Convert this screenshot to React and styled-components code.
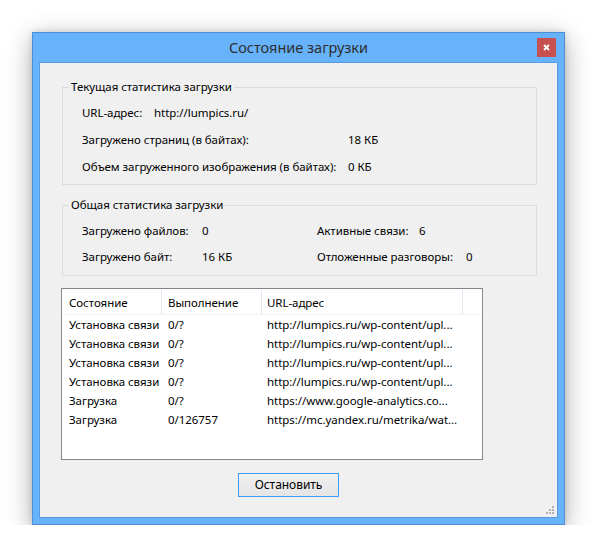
import React from "react";
import styled, { createGlobalStyle } from "styled-components";

const GlobalStyle = createGlobalStyle`
  html, body { margin: 0; padding: 0; background: #ffffff; }
  body {
    font-family: "Noto Sans", "Open Sans", sans-serif;
    font-size: 11.5px;
    letter-spacing: -0.05px;
    color: #000;
  }
`;

const Page = styled.div`
  padding: 32px 0 0 32px;
`;

const Window = styled.div`
  box-sizing: border-box;
  width: 533px;
  height: 493px;
  display: flex;
  flex-direction: column;
  padding: 0 6px 6px;
  background: #66b3fb;
  border: 1px solid #4d8fd2;
  box-shadow: 0 6px 24px rgba(0, 0, 0, 0.33), 0 0 6px rgba(0, 0, 0, 0.12);
`;

const TitleBar = styled.div`
  height: 29px;
  display: grid;
  grid-template-columns: 1fr auto 1fr;
  align-items: center;
`;

const Title = styled.div`
  grid-column: 2;
  font-size: 14.5px;
  letter-spacing: 0;
  color: #2e2e2e;
  padding-bottom: 1px;
`;

const CloseButton = styled.div`
  grid-column: 3;
  justify-self: end;
  align-self: start;
  margin-top: 5px;
  margin-right: 2px;
  width: 19px;
  height: 19px;
  background: #c75050;
  display: flex;
  align-items: center;
  justify-content: center;
`;

const Content = styled.div`
  position: relative;
  flex: 1;
  display: flex;
  flex-direction: column;
  background: #f0f0f0;
  border: 1px solid #5a9be0;
  padding: 24px 20px 0 22px;
`;

const GroupBox = styled.div`
  position: relative;
  border: 1px solid #dcdcdc;
  padding: 17px 0 ${(p) => p.$pb}px 19px;
  display: flex;
  flex-direction: column;
  gap: ${(p) => p.$gap}px;
  margin-bottom: ${(p) => p.$mb}px;
`;

const Legend = styled.div`
  position: absolute;
  top: -9px;
  left: 6px;
  padding: 0 2px;
  background: #f0f0f0;
  line-height: 16px;
  color: #000;
`;

const InfoRow = styled.div`
  display: grid;
  grid-template-columns: ${(p) => p.$lw}px auto;
  line-height: 16px;
  white-space: nowrap;
`;

const PairRow = styled.div`
  display: grid;
  grid-template-columns: 235px auto;
  line-height: 16px;
`;

const Pair = styled.div`
  display: grid;
  grid-template-columns: ${(p) => p.$lw}px auto;
  white-space: nowrap;
`;

const ListBox = styled.div`
  margin-left: -1px;
  width: 422px;
  height: 172px;
  box-sizing: border-box;
  border: 1px solid #828790;
  background: #ffffff;
  margin-bottom: 13px;
`;

const HeaderRow = styled.div`
  display: flex;
  height: 24px;
  padding-top: 1px;
  box-sizing: border-box;
  height: 26px;
  border-bottom: 1px solid #f0f3f8;
`;

const HeaderCell = styled.div`
  box-sizing: border-box;
  width: ${(p) => p.$w}px;
  flex: ${(p) => (p.$w ? "none" : "1")};
  padding-left: ${(p) => p.$pl}px;
  border-right: ${(p) => (p.$w ? "1px solid #e3e8ef" : "none")};
  display: flex;
  align-items: center;
  white-space: nowrap;
`;

const DataRow = styled.div`
  display: flex;
  height: 19px;
  align-items: center;
`;

const Cell = styled.div`
  box-sizing: border-box;
  width: ${(p) => p.$w}px;
  padding-left: ${(p) => p.$pl}px;
  white-space: nowrap;
  overflow: hidden;
`;

const ButtonRow = styled.div`
  display: flex;
  padding-left: 176px;
`;

const Button = styled.div`
  box-sizing: border-box;
  width: 101px;
  height: 24px;
  border: 1px solid #3c9cfc;
  background: linear-gradient(#f0f0f0, #e5e5e5);
  display: flex;
  align-items: center;
  justify-content: center;
  font-size: 12px;
  padding-bottom: 1px;
`;

const Grip = styled.svg`
  position: absolute;
  right: 3px;
  bottom: 3px;
`;

const columns = [
  { w: 100, pl: 7 },
  { w: 100, pl: 6 },
  { w: 201, pl: 5 },
];

const rows = [
  ["Установка связи", "0/?", "http://lumpics.ru/wp-content/upl..."],
  ["Установка связи", "0/?", "http://lumpics.ru/wp-content/upl..."],
  ["Установка связи", "0/?", "http://lumpics.ru/wp-content/upl..."],
  ["Установка связи", "0/?", "http://lumpics.ru/wp-content/upl..."],
  ["Загрузка", "0/?", "https://www.google-analytics.co..."],
  ["Загрузка", "0/126757", "https://mc.yandex.ru/metrika/wat..."],
];

export default function App() {
  return (
    <>
      <GlobalStyle />
      <Page>
        <Window>
          <TitleBar>
            <Title>Состояние загрузки</Title>
            <CloseButton>
              <svg width="7" height="7" viewBox="0 0 7 7">
                <path d="M1 1 L6 6 M6 1 L1 6" stroke="#fff" strokeWidth="1.8" />
              </svg>
            </CloseButton>
          </TitleBar>
          <Content>
            <GroupBox $pb={9} $gap={11} $mb={20}>
              <Legend>Текущая статистика загрузки</Legend>
              <InfoRow $lw={72}>
                <span>URL-адрес:</span>
                <span>http://lumpics.ru/</span>
              </InfoRow>
              <InfoRow $lw={266}>
                <span>Загружено страниц (в байтах):</span>
                <span>18 КБ</span>
              </InfoRow>
              <InfoRow $lw={266}>
                <span>Объем загруженного изображения (в байтах):</span>
                <span>0 КБ</span>
              </InfoRow>
            </GroupBox>
            <GroupBox $pb={10} $gap={10} $mb={12}>
              <Legend>Общая статистика загрузки</Legend>
              <PairRow>
                <Pair $lw={120}>
                  <span>Загружено файлов:</span>
                  <span>0</span>
                </Pair>
                <Pair $lw={102}>
                  <span>Активные связи:</span>
                  <span>6</span>
                </Pair>
              </PairRow>
              <PairRow>
                <Pair $lw={120}>
                  <span>Загружено байт:</span>
                  <span>16 КБ</span>
                </Pair>
                <Pair $lw={149}>
                  <span>Отложенные разговоры:</span>
                  <span>0</span>
                </Pair>
              </PairRow>
            </GroupBox>
            <ListBox>
              <HeaderRow>
                <HeaderCell $w={100} $pl={7}>Состояние</HeaderCell>
                <HeaderCell $w={100} $pl={6}>Выполнение</HeaderCell>
                <HeaderCell $w={201} $pl={5}>URL-адрес</HeaderCell>
                <HeaderCell $pl={0} />
              </HeaderRow>
              {rows.map((r, i) => (
                <DataRow key={i}>
                  {r.map((t, j) => (
                    <Cell key={j} $w={columns[j].w} $pl={columns[j].pl}>
                      {t}
                    </Cell>
                  ))}
                </DataRow>
              ))}
            </ListBox>
            <ButtonRow>
              <Button>Остановить</Button>
            </ButtonRow>
            <Grip width="8" height="8" viewBox="0 0 8 8">
              <rect x="6" y="0" width="2" height="2" fill="#b4b4b4" />
              <rect x="3" y="3" width="2" height="2" fill="#b4b4b4" />
              <rect x="6" y="3" width="2" height="2" fill="#b4b4b4" />
              <rect x="0" y="6" width="2" height="2" fill="#b4b4b4" />
              <rect x="3" y="6" width="2" height="2" fill="#b4b4b4" />
              <rect x="6" y="6" width="2" height="2" fill="#b4b4b4" />
            </Grip>
          </Content>
        </Window>
      </Page>
    </>
  );
}
